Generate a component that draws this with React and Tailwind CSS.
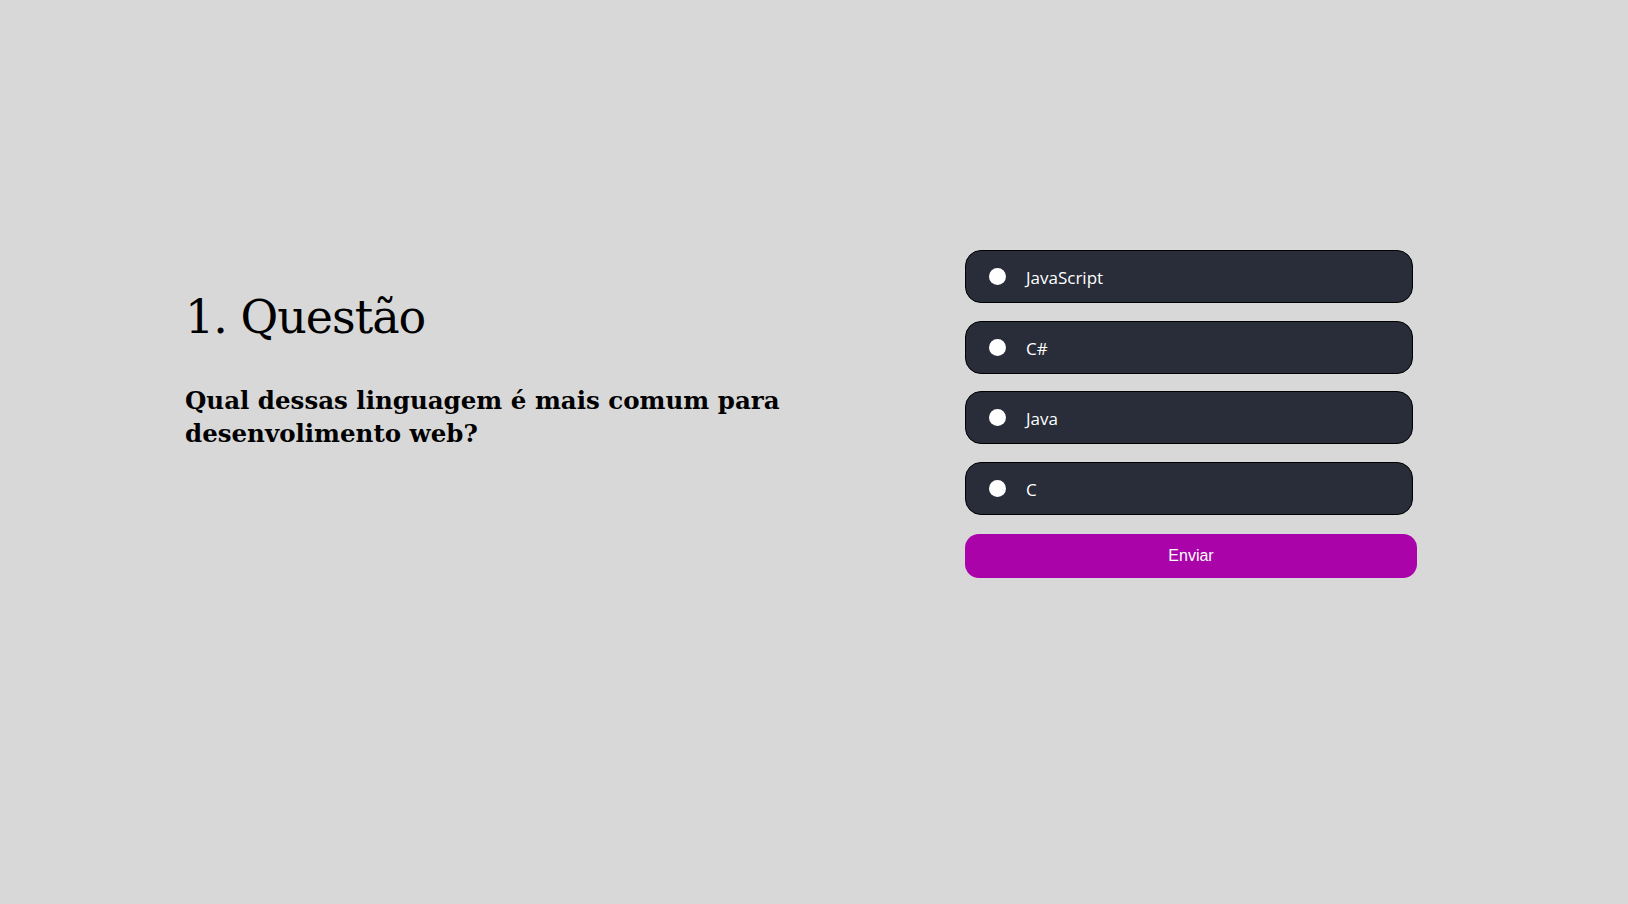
export default function App() {
  const options = ["JavaScript", "C#", "Java", "C"];
  return (
    <div className="min-h-screen w-full bg-[#d8d8d8]">
      <div className="flex flex-row pt-[250px] pl-[185px]">
        <div className="w-[780px] pt-[37px]">
          <h1 className="text-[46px] leading-[60px] text-black font-['DejaVu_Serif',serif] font-normal tracking-[-1px]">
            1. Questão
          </h1>
          <p className="mt-[37px] w-[640px] text-[24.5px] leading-[33px] font-bold text-black font-['DejaVu_Serif',serif]">
            Qual dessas linguagem é mais comum para desenvolimento web?
          </p>
        </div>
        <div className="w-[452px] flex flex-col">
          <div className="flex flex-col gap-[17.5px]">
            {options.map((o) => (
              <label
                key={o}
                className="w-[448px] h-[53px] flex items-center rounded-[16px] border border-black bg-[#292d39] pl-[23px]"
              >
                <span className="w-[17px] h-[17px] rounded-full bg-white shrink-0" />
                <span className="ml-[20px] pt-[3px] text-[17px] text-white font-['Open_Sans',sans-serif]">
                  {o}
                </span>
              </label>
            ))}
          </div>
          <button className="mt-[19px] h-[44px] w-[452px] rounded-[14px] bg-[#a903a9] text-white text-[16px] font-['Liberation_Sans',sans-serif]">
            Enviar
          </button>
        </div>
      </div>
    </div>
  );
}
